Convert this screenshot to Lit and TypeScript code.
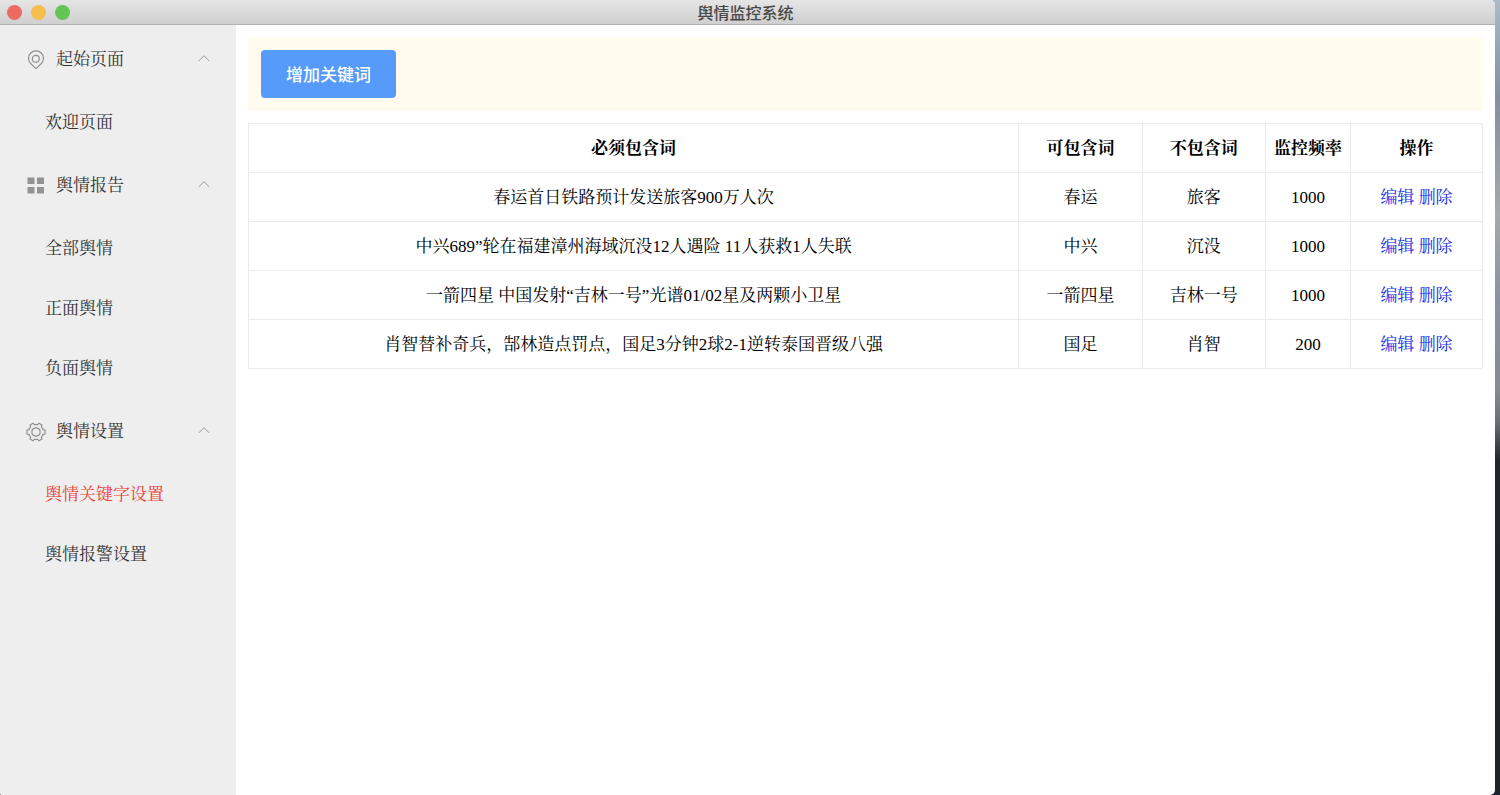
import { LitElement, html, css, svg } from "lit";
import { customElement, state } from "lit/decorators.js";
import { classMap } from "lit/directives/class-map.js";

interface MenuGroup {
  title: string;
  icon: "pin" | "grid" | "gear";
  items: string[];
}

interface KeywordRule {
  must: string;
  may: string;
  not: string;
  frequency: number;
}

const MENU: MenuGroup[] = [
  { title: "起始页面", icon: "pin", items: ["欢迎页面"] },
  { title: "舆情报告", icon: "grid", items: ["全部舆情", "正面舆情", "负面舆情"] },
  { title: "舆情设置", icon: "gear", items: ["舆情关键字设置", "舆情报警设置"] },
];

const RULES: KeywordRule[] = [
  { must: "春运首日铁路预计发送旅客900万人次", may: "春运", not: "旅客", frequency: 1000 },
  { must: "中兴689”轮在福建漳州海域沉没12人遇险 11人获救1人失联", may: "中兴", not: "沉没", frequency: 1000 },
  { must: "一箭四星 中国发射“吉林一号”光谱01/02星及两颗小卫星", may: "一箭四星", not: "吉林一号", frequency: 1000 },
  { must: "肖智替补奇兵，郜林造点罚点，国足3分钟2球2-1逆转泰国晋级八强", may: "国足", not: "肖智", frequency: 200 },
];

const ICONS = {
  pin: svg`<path d="M10 18.600 L4.600 13.500 A7.500 7.500 0 1 1 15.400 13.500 Z"/><circle cx="9.800" cy="8.800" r="3.500"/>`,
  grid: svg`<path class="solid" d="M1.500 1.500h7v6.500h-7zM11 1.500h7v6.500h-7zM1.500 11h7v6.500h-7zM11 11h7v6.500h-7z"/>`,
  gear: svg`<path d="M7 1.200 L8.300 2.700 L11.700 2.700 L13 1.200 L16 2.900 L15.400 4.800 L17 7.600 L19 8 L19 12 L17 12.400 L15.400 15.200 L16 17.100 L13 18.800 L11.700 17.300 L8.300 17.300 L7 18.800 L4 17.100 L4.600 15.200 L3 12.400 L1 12 L1 8 L3 7.600 L4.600 4.800 L4 2.900 Z"/><circle cx="10" cy="10" r="4.200"/>`,
};

@customElement("side-menu")
export class SideMenu extends LitElement {
  @state() private current = "舆情关键字设置";
  @state() private closed: string[] = [];

  static styles = css`
    :host {
      display: block;
      box-sizing: border-box;
      padding-top: 2px;
      background: #eee;
      color: #333;
    }
    .heading {
      display: flex;
      align-items: center;
      gap: 10px;
      width: 100%;
      height: 66px;
      padding: 0 26px;
      border: 0;
      background: none;
      color: inherit;
      font: inherit;
      text-align: left;
      cursor: pointer;
    }
    .icon {
      width: 20px;
      height: 20px;
      flex: none;
      fill: none;
      stroke: #909090;
      stroke-width: 1.2;
      stroke-linejoin: round;
    }
    .solid {
      fill: #939393;
      stroke: none;
    }
    .title {
      flex: 1;
    }
    .chevron {
      width: 12px;
      height: 12px;
      fill: none;
      stroke: #999;
    }
    .folded .chevron {
      transform: rotate(180deg);
    }
    .list {
      margin: 0;
      padding: 0;
      list-style: none;
    }
    .link {
      display: flex;
      align-items: center;
      height: 60px;
      padding-left: 45px;
      color: inherit;
      text-decoration: none;
    }
    .active {
      color: #e93f35;
    }
  `;

  private toggle(title: string) {
    this.closed = this.closed.includes(title)
      ? this.closed.filter((t) => t !== title)
      : [...this.closed, title];
  }

  private open(event: Event, item: string) {
    event.preventDefault();
    this.current = item;
  }

  render() {
    return html`<nav>
      ${MENU.map((group) => {
        const folded = this.closed.includes(group.title);
        return html`
          <button
            class=${classMap({ heading: true, folded })}
            aria-expanded=${folded ? "false" : "true"}
            @click=${() => this.toggle(group.title)}
          >
            <svg class="icon" viewBox="0 0 20 20" aria-hidden="true">${ICONS[group.icon]}</svg>
            <span class="title">${group.title}</span>
            <svg class="chevron" viewBox="0 0 12 12" aria-hidden="true"><path d="M0.700 7 L6 1.700 L11.300 7" /></svg>
          </button>
          <ul class="list" ?hidden=${folded}>
            ${group.items.map(
              (item) => html`<li>
                <a
                  class=${classMap({ link: true, active: item === this.current })}
                  href="#"
                  @click=${(e: Event) => this.open(e, item)}
                  >${item}</a
                >
              </li>`
            )}
          </ul>
        `;
      })}
    </nav>`;
  }
}

@customElement("keyword-table")
export class KeywordTable extends LitElement {
  static styles = css`
    :host {
      display: block;
    }
    .table {
      width: 100%;
      table-layout: fixed;
      border-collapse: collapse;
      color: #000;
      text-align: center;
      line-height: 24px;
    }
    .words {
      width: 10%;
    }
    .rate {
      width: 85px;
    }
    .actions {
      width: 132px;
    }
    .cell {
      padding: 13px 4px 11px;
      border: 1px solid #ebebeb;
    }
    .action {
      color: #1a2fe8;
      text-decoration: none;
    }
  `;

  render() {
    return html`<table class="table">
      <colgroup>
        <col />
        <col class="words" />
        <col class="words" />
        <col class="rate" />
        <col class="actions" />
      </colgroup>
      <thead>
        <tr>
          ${["必须包含词", "可包含词", "不包含词", "监控频率", "操作"].map(
            (name) => html`<th class="cell" scope="col">${name}</th>`
          )}
        </tr>
      </thead>
      <tbody>
        ${RULES.map(
          (rule) => html`<tr>
            <td class="cell">${rule.must}</td>
            <td class="cell">${rule.may}</td>
            <td class="cell">${rule.not}</td>
            <td class="cell">${rule.frequency}</td>
            <td class="cell"><a class="action" href="#">编辑</a> <a class="action" href="#">删除</a></td>
          </tr>`
        )}
      </tbody>
    </table>`;
  }
}

@customElement("app-root")
export class AppRoot extends LitElement {
  static styles = css`
    :host {
      display: block;
      box-sizing: border-box;
      height: 100vh;
      padding-right: 5px;
      background: linear-gradient(#a9bccb 0%, #7f909f 12%, #a3a9ae 27%, #8493a1 38%, #838b94 49%, #68707a 53%, #1d262e 58%, #1b232b 100%);
      font-family: "Liberation Serif", "Noto Serif CJK SC", "Noto Sans CJK SC", serif;
      font-size: 17px;
      line-height: 24px;
    }
    .window {
      display: flex;
      flex-direction: column;
      height: 100%;
      overflow: hidden;
      border-radius: 0 5px 5px 2px;
      background: #fff;
    }
    .titlebar {
      display: grid;
      grid-template-columns: 1fr auto 1fr;
      align-items: center;
      height: 24px;
      padding: 0 11px 0 7px;
      border-bottom: 1px solid #b2b2b2;
      background: linear-gradient(#e5e5e5, #cfcfcf);
    }
    .lights {
      display: flex;
      gap: 9px;
    }
    .light {
      width: 15px;
      height: 15px;
      padding: 0;
      border: 0;
      border-radius: 50%;
    }
    .close {
      background: #ed6b60;
    }
    .minimize {
      background: #f5be4f;
    }
    .zoom {
      background: #62c554;
    }
    .caption {
      margin: 0;
      color: #484848;
      font-family: "Noto Sans CJK SC", sans-serif;
      font-size: 16px;
      font-weight: 500;
      line-height: 24px;
    }
    .body {
      display: grid;
      grid-template-columns: 236px 1fr;
      flex: 1;
      min-height: 0;
    }
    .content {
      display: flex;
      flex-direction: column;
      gap: 12px;
      min-width: 0;
      padding: 12px;
    }
    .toolbar {
      padding: 13px;
      background: #fffcef;
    }
    .add {
      display: block;
      height: 48px;
      padding: 0 25px 2px;
      border: 0;
      border-radius: 4px;
      background: #579bfa;
      color: #fff;
      font-family: "Noto Sans CJK SC", sans-serif;
      font-size: 17px;
      font-weight: 500;
      cursor: pointer;
    }
  `;

  render() {
    return html`<div class="window">
      <header class="titlebar">
        <div class="lights">
          <button class="light close" aria-label="关闭"></button>
          <button class="light minimize" aria-label="最小化"></button>
          <button class="light zoom" aria-label="缩放"></button>
        </div>
        <h1 class="caption">舆情监控系统</h1>
      </header>
      <div class="body">
        <side-menu></side-menu>
        <main class="content">
          <div class="toolbar"><button class="add">增加关键词</button></div>
          <keyword-table></keyword-table>
        </main>
      </div>
    </div>`;
  }
}
